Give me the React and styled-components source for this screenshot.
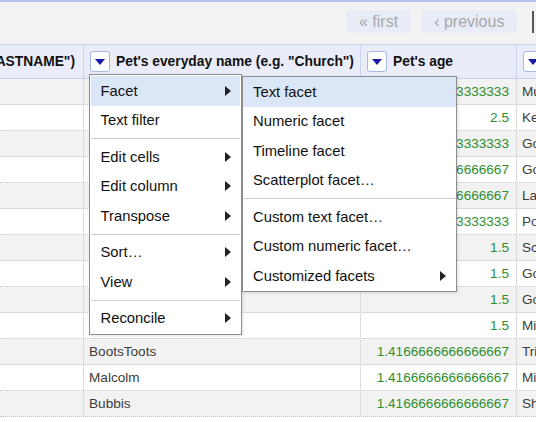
import React from 'react';
import styled, { createGlobalStyle } from 'styled-components';

const GlobalStyle = createGlobalStyle`
  html, body {
    margin: 0;
    padding: 0;
  }
  body {
    font-family: 'Liberation Sans', Arial, sans-serif;
    background: #fff;
    overflow: hidden;
  }
`;

const Page = styled.div`
  position: relative;
  width: 536px;
  height: 422px;
  overflow: hidden;
`;

const TopBar = styled.div`
  box-sizing: border-box;
  height: 44px;
  border-top: 2px solid #b3c5ef;
  background: #f3f3f3;
  display: flex;
  align-items: flex-start;
  gap: 10px;
  padding: 8px 0 0 346px;
`;

const PagerButton = styled.span`
  height: 23px;
  line-height: 24px;
  padding: 0 13px;
  border-radius: 4px;
  background: #e8ecf6;
  color: #a8a8a8;
  font-size: 16px;
  white-space: nowrap;
`;

const PagerDivider = styled.span`
  flex: none;
  width: 2px;
  height: 22px;
  margin: 1px 0 0 5px;
  background: #555;
`;

const columns = '84px 277px 156px 200px';

const HeaderRow = styled.div`
  box-sizing: border-box;
  display: grid;
  grid-template-columns: ${columns};
  height: 35px;
  background: #eaedf9;
  border-top: 1px solid #c5d0ef;
  border-bottom: 1px solid #c5d0ef;
`;

const HeaderCell = styled.div`
  display: flex;
  align-items: center;
  justify-content: ${(p) => (p.$right ? 'flex-end' : 'flex-start')};
  gap: 6px;
  padding: 0 8px 0 6px;
  border-right: 1px solid #c9d3f0;
  overflow: hidden;
  white-space: nowrap;
  font-size: 13.8px;
  font-weight: bold;
  color: #111;
`;

const DropButton = styled.span`
  flex: none;
  box-sizing: border-box;
  width: 20px;
  height: 21px;
  background: #fff;
  border: 1px solid #a9b9e7;
  border-radius: 3px;
  display: flex;
  align-items: center;
  justify-content: center;

  &::after {
    content: '';
    width: 0;
    height: 0;
    border-left: 5px solid transparent;
    border-right: 5px solid transparent;
    border-top: 6px solid #1a1aa8;
  }
`;

const Row = styled.div`
  box-sizing: border-box;
  display: grid;
  grid-template-columns: ${columns};
  height: 26px;
  background: ${(p) => (p.$shaded ? '#f2f2f2' : '#fff')};
  border-bottom: 1px dotted #c8c8c8;
`;

const Cell = styled.div`
  display: flex;
  align-items: center;
  justify-content: ${(p) => (p.$num ? 'flex-end' : 'flex-start')};
  padding: ${(p) => (p.$num ? '0 7px 0 6px' : '0 6px 0 5px')};
  border-right: 1px solid #dcdcdc;
  overflow: hidden;
  white-space: nowrap;
  font-size: 13.6px;
  color: ${(p) => (p.$num ? '#2f8f2f' : '#3c3c3c')};
`;

const Menu = styled.div`
  position: absolute;
  left: ${(p) => p.$left}px;
  top: ${(p) => p.$top}px;
  width: ${(p) => p.$width}px;
  box-sizing: border-box;
  background: #fff;
  border: 1px solid #8e8e8e;
  padding: ${(p) => (p.$inset ? '1px' : '0')};
  box-shadow: 1px 1px 3px rgba(0, 0, 0, 0.12);
`;

const MenuItem = styled.div`
  height: 29.5px;
  display: flex;
  align-items: center;
  justify-content: space-between;
  padding: 0 ${(p) => (p.$sub ? 10 : 9)}px 0 ${(p) => (p.$sub ? 10 : 9.5)}px;
  background: ${(p) => (p.$active ? '#dbe6f7' : 'transparent')};
  font-size: 14.8px;
  color: #111;
  white-space: nowrap;
`;

const Arrow = styled.span`
  width: 0;
  height: 0;
  border-top: 5px solid transparent;
  border-bottom: 5px solid transparent;
  border-left: 6px solid #222;
`;

const Separator = styled.div`
  height: 1px;
  margin: 3px 0;
  background: #cfcfcf;
`;

const rows = [
  ['Church', '1.8333333333333333', 'Mustard'],
  ['Kitty', '2.5', 'Kelsey'],
  ['Fluffy', '1.8333333333333333', 'Goldie'],
  ['Rex', '1.6666666666666667', 'Goofy'],
  ['Tiger', '1.6666666666666667', 'Larry'],
  ['Spot', '1.5833333333333333', 'Pooky'],
  ['Max', '1.5', 'Scruffy'],
  ['Bella', '1.5', 'Gordon'],
  ['Lucy', '1.5', 'Goose'],
  ['Oscar', '1.5', 'Milo'],
  ['BootsToots', '1.4166666666666667', 'Trixie'],
  ['Malcolm', '1.4166666666666667', 'Mimi'],
  ['Bubbis', '1.4166666666666667', 'Shadow'],
];

const mainMenu = [
  { label: 'Facet', sub: true, active: true },
  { label: 'Text filter' },
  'sep',
  { label: 'Edit cells', sub: true },
  { label: 'Edit column', sub: true },
  { label: 'Transpose', sub: true },
  'sep',
  { label: 'Sort…', sub: true },
  { label: 'View', sub: true },
  'sep',
  { label: 'Reconcile', sub: true },
];

const facetMenu = [
  { label: 'Text facet', active: true },
  { label: 'Numeric facet' },
  { label: 'Timeline facet' },
  { label: 'Scatterplot facet…' },
  'sep',
  { label: 'Custom text facet…' },
  { label: 'Custom numeric facet…' },
  { label: 'Customized facets', sub: true },
];

const MenuList = ({ items, isSub }) =>
  items.map((item, i) =>
    item === 'sep' ? (
      <Separator key={i} />
    ) : (
      <MenuItem key={i} $active={item.active} $sub={isSub}>
        <span>{item.label}</span>
        {item.sub && <Arrow />}
      </MenuItem>
    )
  );

export default function App() {
  return (
    <Page>
      <GlobalStyle />
      <TopBar>
        <PagerButton>« first</PagerButton>
        <PagerButton>‹ previous</PagerButton>
        <PagerDivider />
      </TopBar>

      <HeaderRow>
        <HeaderCell $right>
          <span>Pet owner's name (e.g. "FIRSTNAME LASTNAME")</span>
        </HeaderCell>
        <HeaderCell>
          <DropButton />
          <span>Pet's everyday name (e.g. "Church")</span>
        </HeaderCell>
        <HeaderCell>
          <DropButton />
          <span>Pet's age</span>
        </HeaderCell>
        <HeaderCell>
          <DropButton />
          <span>Vet's name</span>
        </HeaderCell>
      </HeaderRow>

      {rows.map(([name, age, vet], i) => (
        <Row key={i} $shaded={i % 2 === 0}>
          <Cell />
          <Cell>{name}</Cell>
          <Cell $num>{age}</Cell>
          <Cell>{vet}</Cell>
        </Row>
      ))}

      <Menu $left={89} $top={74} $width={153} $inset>
        <MenuList items={mainMenu} />
      </Menu>
      <Menu $left={242} $top={76} $width={215}>
        <MenuList items={facetMenu} isSub />
      </Menu>
    </Page>
  );
}
